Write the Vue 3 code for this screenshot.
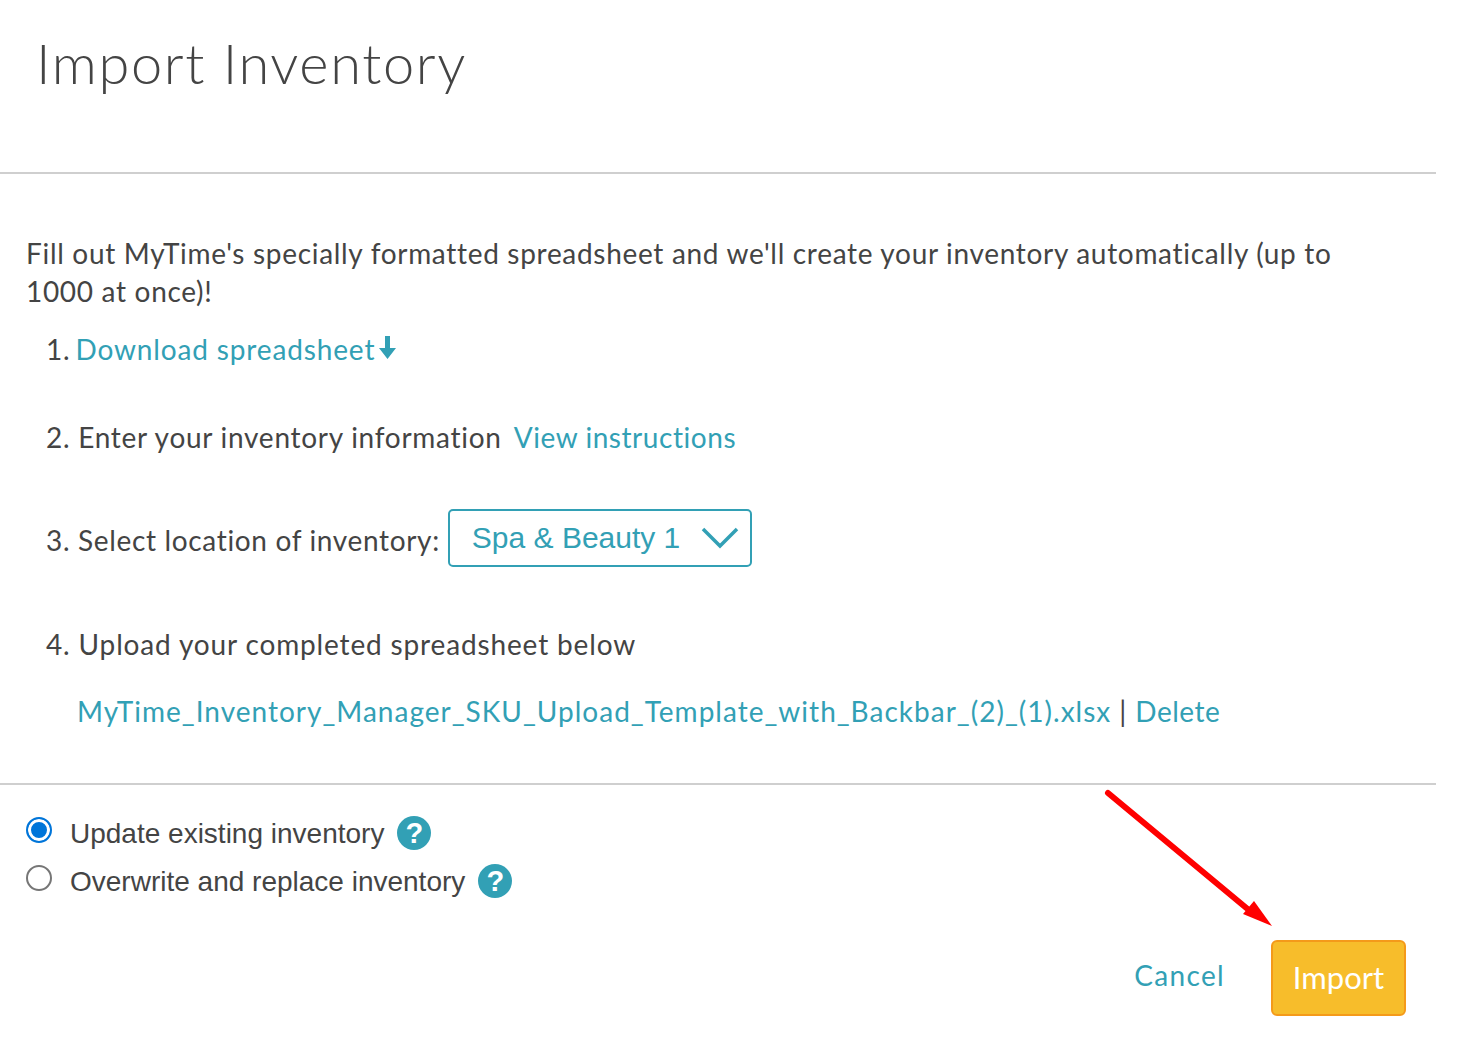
<template>
  <div class="page">
    <header class="header">
      <h1>Import Inventory</h1>
    </header>

    <section class="body">
      <p class="intro">Fill out MyTime's specially formatted spreadsheet and we'll create your inventory automatically (up to 1000 at once)!</p>

      <div class="step step-1">
        <span>1.</span>
        <a class="link">Download spreadsheet</a>
        <svg class="down" width="17" height="23" viewBox="0 0 17 23"><path d="M6 0h5v12h6l-8.500 11L0 12h6z" fill="#32a0b5" /></svg>
      </div>

      <div class="step step-2">
        <span>2. Enter your inventory information</span>
        <a class="link view">View instructions</a>
      </div>

      <div class="step step-3">
        <span class="step-label">3. Select location of inventory:</span>
        <div class="select">
          <span>{{ location }}</span>
          <svg width="38" height="22" viewBox="0 0 38 22"><path d="M2 2l17 17L36 2" fill="none" stroke="#32a0b5" stroke-width="3.500" /></svg>
        </div>
      </div>

      <div class="step step-4">4. Upload your completed spreadsheet below</div>

      <div class="file">
        <a class="link">{{ fileName }}</a>
        <span class="sep">|</span>
        <a class="link delete">Delete</a>
      </div>
    </section>

    <section class="footer">
      <div class="options">
        <label v-for="opt in options" :key="opt.label" class="option">
          <span class="radio" :class="{ checked: opt.checked }"></span>
          <span class="option-label">{{ opt.label }}</span>
          <span class="help">?</span>
        </label>
      </div>
      <div class="actions">
        <a class="cancel">Cancel</a>
        <button class="import">Import</button>
      </div>
      <svg class="arrow" width="180" height="150" viewBox="0 0 180 150">
        <path d="M13 8L155 126" stroke="#ff0000" stroke-width="6" stroke-linecap="round" fill="none" />
        <path d="M177 141L148 129 159 116z" fill="#ff0000" />
      </svg>
    </section>
  </div>
</template>

<script setup>
const location = 'Spa & Beauty 1'
const fileName = 'MyTime_Inventory_Manager_SKU_Upload_Template_with_Backbar_(2)_(1).xlsx'
const options = [
  { label: 'Update existing inventory', checked: true },
  { label: 'Overwrite and replace inventory', checked: false },
]
</script>

<style>
body {
  background: #fff;
}
</style>

<style scoped>
.page {
  width: 1436px;
  height: 1040px;
  font-family: "Lato", "Open Sans", sans-serif;
  font-size: 28px;
  letter-spacing: 0.85px;
  color: #444;
  overflow: hidden;
}

.header {
  height: 172px;
  border-bottom: 2px solid #cfcfcf;
  padding-left: 36px;
}

h1 {
  margin: 0;
  padding-top: 28px;
  font-size: 56px;
  line-height: 70px;
  font-weight: 300;
  letter-spacing: 1.6px;
  color: #444;
}

.body {
  height: 549px;
  border-bottom: 2px solid #cfcfcf;
  padding: 60px 0 0 26px;
}

.intro {
  margin: 0;
  width: 1340px;
  line-height: 38px;
  letter-spacing: 0.69px;
}

.link {
  color: #32a0b5;
}

.step {
  display: flex;
  align-items: center;
  line-height: 38px;
  padding-left: 20px;
}

.step-1 {
  margin-top: 20px;
  gap: 5px;
}

.down {
  margin-left: -1px;
  margin-top: -4px;
}

.step-2 {
  margin-top: 50px;
  gap: 12px;
  letter-spacing: 0.73px;
}

.view {
  letter-spacing: 0.55px;
}

.step-3 {
  margin-top: 53px;
  gap: 8px;
  letter-spacing: 0.66px;
}

.step-label {
  margin-top: 4px;
}

.select {
  width: 304px;
  height: 58px;
  box-sizing: border-box;
  border: 2px solid #32a0b5;
  border-radius: 5px;
  padding: 0 11px 0 22px;
  display: flex;
  align-items: center;
  justify-content: space-between;
  color: #32a0b5;
  font-family: "Liberation Sans", sans-serif;
  font-size: 30px;
  letter-spacing: 0;
}

.step-4 {
  margin-top: 58px;
}

.file {
  margin-top: 29px;
  padding-left: 51px;
  line-height: 38px;
  letter-spacing: 1.01px;
}

.delete {
  letter-spacing: 0.5px;
}

.sep {
  margin: 0 8px;
}

.footer {
  position: relative;
  height: 255px;
}

.options {
  padding: 24px 0 0 26px;
}

.option {
  display: flex;
  align-items: center;
  height: 48px;
  font-family: "Liberation Sans", sans-serif;
  font-size: 28px;
  letter-spacing: 0;
}

.option-label {
  padding-top: 2px;
}

.radio {
  width: 26px;
  height: 26px;
  box-sizing: border-box;
  border: 2px solid #767676;
  border-radius: 50%;
  margin-right: 18px;
  margin-top: -6px;
  background: #fff;
}

.radio.checked {
  border-color: #0075d9;
  background: #0075d9;
  box-shadow: inset 0 0 0 3px #fff;
}

.help {
  width: 34px;
  height: 34px;
  margin-left: 13px;
  border-radius: 50%;
  background: #32a0b5;
  color: #fff;
  font-size: 29px;
  font-weight: 700;
  line-height: 34px;
  text-align: center;
}

.actions {
  position: absolute;
  right: 30px;
  top: 155px;
  display: flex;
  align-items: center;
  gap: 46px;
}

.cancel {
  color: #32a0b5;
  font-size: 28px;
  letter-spacing: 1.35px;
  margin-bottom: 6px;
}

.import {
  width: 135px;
  height: 76px;
  padding: 0 0 3px;
  background: #f7bd2b;
  border: 2px solid #f49a1a;
  border-radius: 6px;
  color: #fff;
  font-family: inherit;
  font-size: 31px;
}

.arrow {
  position: absolute;
  left: 1095px;
  top: 0;
}
</style>
